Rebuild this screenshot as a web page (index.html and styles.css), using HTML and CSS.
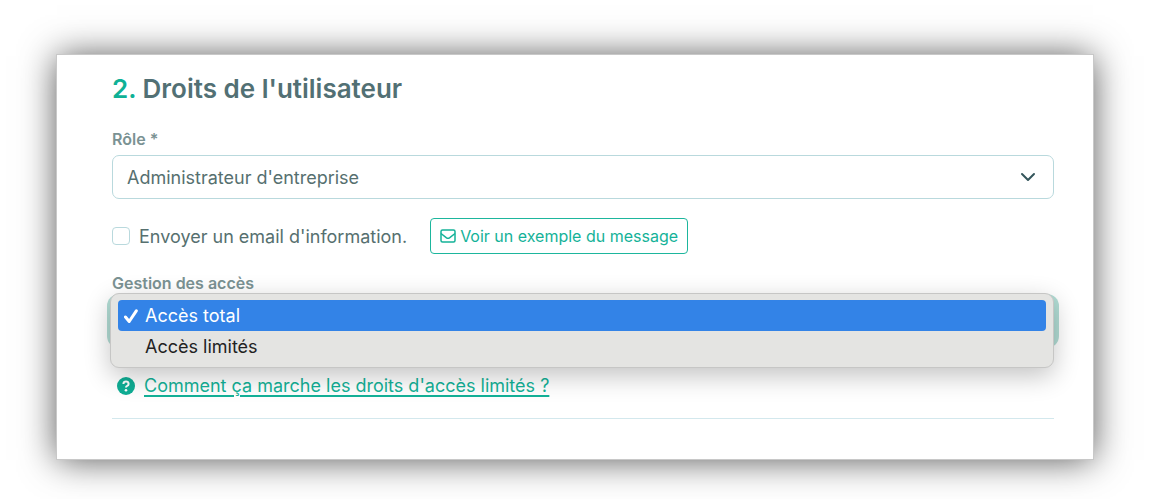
FILE: index.html
```html
<!DOCTYPE html>
<html lang="fr">
<head>
  <meta charset="UTF-8">
  <meta name="viewport" content="width=device-width, initial-scale=1.0">
  <title>Droits de l'utilisateur</title>
  <link rel="stylesheet" href="styles.css">
</head>
<body>

  <form class="card">
    <h2 class="card-title"><span class="step">2.</span> Droits de l'utilisateur</h2>

    <!-- Role -->
    <label class="field-label" for="role">Rôle *</label>
    <div class="select-box">
      <select id="role" class="field-select">
        <option selected>Administrateur d'entreprise</option>
      </select>
      <svg class="chevron" viewBox="0 0 16 16" aria-hidden="true"><path d="M2 5l6 6 6-6"/></svg>
    </div>

    <!-- Information email -->
    <div class="email-row">
      <label class="check-label" for="sendEmail">
        <input type="checkbox" id="sendEmail">
        Envoyer un email d'information.
      </label>
      <button type="button" class="example-btn">
        <svg class="envelope" viewBox="0 0 16 14" aria-hidden="true"><rect x="1" y="1" width="14" height="12" rx="1.5"/><path d="M1 4.5l5.5 4.3q1.5 1 3 0L15 4.5"/></svg>
        Voir un exemple du message
      </button>
    </div>

    <!-- Access, with its menu open -->
    <label class="field-label" for="access">Gestion des accès</label>
    <div class="select-box">
      <select id="access" class="field-select focused">
        <option></option>
      </select>
      <div class="menu" role="listbox" aria-label="Gestion des accès">
        <button type="button" class="menu-item selected" role="option" aria-selected="true">
          <svg class="tick" viewBox="0 0 14 14" aria-hidden="true"><path d="M1.5 8l3.7 4.5L12.3 1.8"/></svg>
          Accès total
        </button>
        <button type="button" class="menu-item" role="option" aria-selected="false">Accès limités</button>
      </div>
    </div>

    <div class="help">
      <svg class="help-icon" viewBox="0 0 18 18" aria-hidden="true"><circle cx="9" cy="9" r="9"/><path d="M6.4 7Q6.6 4.6 9 4.6T11.6 6.9Q11.6 8.2 10.2 8.8Q9 9.3 9 10.5"/><circle class="dot" cx="9" cy="13.2" r="1.3"/></svg>
      <a href="#">Comment ça marche les droits d'accès limités ?</a>
    </div>

    <hr>
  </form>

</body>
</html>
```

FILE: styles.css
```css
* {
  box-sizing: border-box;
}

body {
  margin: 0;
  padding: 55px 57px 40px;
  background: #fff;
  color: #56706f;
  font-family: Inter, "Liberation Sans", sans-serif;
  font-size: 18px;
}

button, select {
  font-family: inherit;
}

.card {
  padding: 16px 39px 40px 55px;
  background: #fff;
  box-shadow: 0 0 0 1px #c8c8c8, 0 1px 34px rgba(0, 0, 0, 0.68);
}

.card-title {
  margin: 0 0 24px;
  font-size: 26px;
  font-weight: 600;
  line-height: 36px;
  color: #527074;
}

.step {
  color: #0fb196;
}

.field-label {
  display: block;
  margin-bottom: 8px;
  font-size: 16px;
  font-weight: 600;
  line-height: 16px;
  color: #7b9293;
}

.select-box {
  position: relative;
}

.field-select {
  display: block;
  width: 100%;
  height: 44px;
  padding: 0 40px 0 14px;
  font-size: 18px;
  color: #56706f;
  background: #fff;
  border: 1px solid #b9d9dd;
  border-radius: 7px;
  appearance: none;
}

.focused {
  box-shadow: 0 0 0 5px #b2ddd5;
}

.chevron {
  position: absolute;
  top: 14px;
  right: 18px;
  width: 16px;
  height: 16px;
  fill: none;
  stroke: #35565c;
  stroke-width: 2;
  stroke-linecap: round;
  stroke-linejoin: round;
}

.email-row {
  display: flex;
  align-items: center;
  gap: 23px;
  margin: 19px 0 21px;
}

.check-label {
  display: flex;
  align-items: center;
  gap: 9px;
}

.check-label input {
  width: 18px;
  height: 18px;
  margin: 0;
  background: #fff;
  border: 1px solid #b9d9dd;
  border-radius: 4px;
  appearance: none;
}

.check-label input:checked {
  background: #0fb196;
}

.example-btn {
  display: flex;
  align-items: center;
  gap: 4px;
  height: 36px;
  padding: 0 9px;
  font-size: 16px;
  font-weight: 400;
  color: #14b298;
  background: #fff;
  border: 1px solid #1db69d;
  border-radius: 4px;
}

.envelope {
  width: 16px;
  height: 14px;
  fill: none;
  stroke: #14b298;
  stroke-width: 1.5;
}

/* Open list over the access select */
.menu {
  position: absolute;
  top: -6px;
  left: -2px;
  right: 0;
  padding: 6px 7px 5px;
  background: #e4e4e2;
  border: 1px solid #c6c6c5;
  border-radius: 9px;
  box-shadow: 0 8px 26px rgba(0, 0, 0, 0.24);
}

.menu-item {
  display: flex;
  align-items: center;
  gap: 7px;
  width: 100%;
  height: 31px;
  padding: 0 6px 0 27px;
  font-size: 18px;
  color: #222;
  background: none;
  border: none;
  border-radius: 4px;
}

.menu-item.selected {
  padding-left: 6px;
  color: #fff;
  background: #3383e7;
}

.tick {
  width: 14px;
  height: 14px;
  fill: none;
  stroke: #fff;
  stroke-width: 3;
  stroke-linecap: round;
  stroke-linejoin: round;
}

.help {
  display: flex;
  align-items: center;
  gap: 9px;
  margin: 32px 0 21px;
  padding-left: 5px;
  line-height: 22px;
}

.help-icon {
  width: 18px;
  height: 18px;
  fill: #0fae95;
}

.help-icon path {
  fill: none;
  stroke: #fff;
  stroke-width: 2;
}

.help-icon .dot {
  fill: #fff;
}

.help a {
  color: #14b298;
  text-decoration-thickness: 2px;
  text-underline-offset: 3px;
}

hr {
  margin: 0;
  border: none;
  border-top: 1px solid #d3e8ed;
}
```
